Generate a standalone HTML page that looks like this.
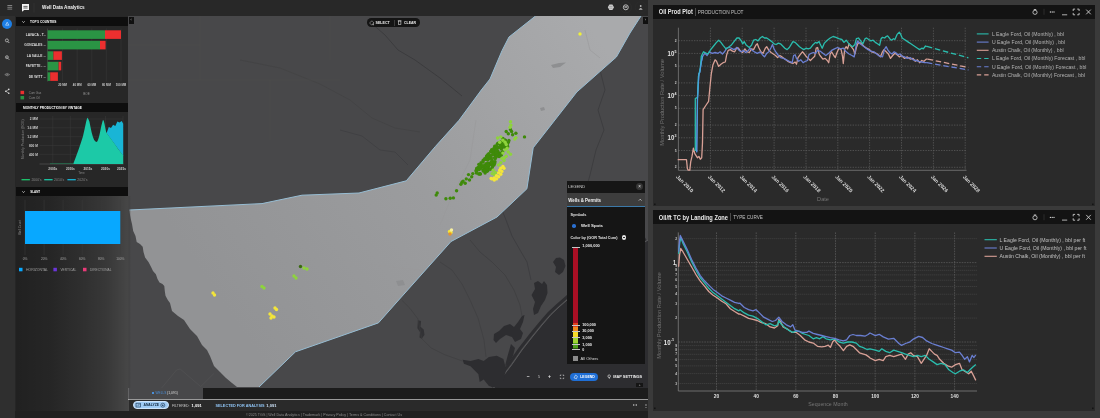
<!DOCTYPE html>
<html><head><meta charset="utf-8"><title>Well Data Analytics</title>
<style>
*{margin:0;padding:0;box-sizing:border-box}
html,body{width:1100px;height:418px;overflow:hidden;background:#3a3a3a;font-family:"Liberation Sans",sans-serif;color:#fff}
.abs{position:absolute}
#app{position:absolute;left:0;top:0;width:648px;height:418px;background:#262626;overflow:hidden}
.t{position:absolute;white-space:nowrap;line-height:1}
svg{position:absolute;left:0;top:0;overflow:visible}
svg text{font-family:"Liberation Sans",sans-serif}
</style></head><body>
<div id="root" style="position:absolute;left:0;top:0;width:1100px;height:418px;will-change:transform">

<div id="app">
<svg id="map" width="648" height="418" viewBox="0 0 648 418">
<rect x="128" y="16" width="520" height="384" fill="#48484a"/>
<path d="M493.8 388.0 L500.0 380.0 L511.7 364.8 L522.0 350.0 L533.0 336.0 L542.0 325.0 L551.0 314.6 L559.0 307.0 L567.0 300.0 L590.0 280.0 L620.0 258.0 L648.0 240.0 L648 388 Z" fill="#2d2d30"/>
<path d="M493.8 388.0 L500.0 380.0 L511.7 364.8 L522.0 350.0 L533.0 336.0 L542.0 325.0 L551.0 314.6 L559.0 307.0 L567.0 300.0 L590.0 280.0 L620.0 258.0 L648.0 240.0" fill="none" stroke="#2d2d30" stroke-width="3" transform="translate(-2.2 -1.2)"/>
<path d="M493.8 388.0 L500.0 380.0 L511.7 364.8 L522.0 350.0 L533.0 336.0 L542.0 325.0 L551.0 314.6 L559.0 307.0 L567.0 300.0 L590.0 280.0 L620.0 258.0 L648.0 240.0" fill="none" stroke="#58585a" stroke-width="1"/>
<path d="M462.6 359.7 L470.5 361.1 L478.4 358.9 L483.7 361.1 L488.9 357.1 L496.8 355.8 L503.4 358.9 L506.1 368.9 L503.4 380.8 L498.2 387.9 L488.9 386.1 L483.7 379.5 L479.7 382.1 L478.4 374.2 L470.5 366.3 L463.9 363.7 Z" fill="#2d2d30"/>
<path d="M417.9 320.3 L421.1 321.1 L420.5 326.8 L423.7 329.5 L424.5 334.7 L421.8 338.7 L419.5 337.4 L420.0 332.1 L417.4 328.2 Z" fill="#323235"/>
<path d="M402.1 300.5 L410.0 308.4 L417.9 318.9 L421.8 338.7 L431.1 347.9 L444.2 354.5 L462.6 361.1" fill="none" stroke="#3c3c3e" stroke-width="0.6"/>
<path d="M494 334 L499 331 L504 326 L510 324 L514 327 L518 322 L522 316 L524.5 315 L523 322 L520 329 L523 333 L521 339 L515 342 L512 337 L506 335 L500 339 L496 343 L493.5 340 Z" fill="#2d2d30"/>
<path d="M531.5 295 L535 289 L534 283 L538 281 L542 284 L544 281 L547 285 L547.5 293 L545 300 L541 306 L538 313 L534 315 L533 309 L535 302 Z" fill="#2d2d30"/>
<path d="M553 262 L556 258 L560 257.5 L564 260 L565.5 266 L563 272 L559 275 L555 272 L556 267 Z" fill="#2d2d30"/>
<path d="M511 344 L515 348 L513 356 L508 364 L505 366 L507 358 Z" fill="#2d2d30"/>
<path d="M497 190 L500 205 L506 220 L512 236 L520 250 L527 262 L531 280" fill="none" stroke="#3a3a3c" stroke-width="0.7"/>
<path d="M470 240 L480 252 L492 262 L505 275 L514 290 L520 305 L522 316" fill="none" stroke="#3a3a3c" stroke-width="0.6"/>
<path d="M440 262 L452 270 L462 284 L470 300 L478 318 L484 340 L486 357" fill="none" stroke="#3a3a3c" stroke-width="0.5"/>
<path d="M600 70 L605 90 L598 110 L604 130 L596 150 L590 175 L583 200" fill="none" stroke="#3a3a3c" stroke-width="0.8"/>
<path d="M370 22 L385 35 L398 50 L415 60 L440 78 L462 96" fill="none" stroke="#3a3a3c" stroke-width="0.9"/>
<path d="M240 60 L280 68 L320 84 L350 100 L372 118 L395 128 L420 132" fill="none" stroke="#424244" stroke-width="0.8"/>
<path d="M340 130 L362 136 L380 150 L395 152 L408 165" fill="none" stroke="#3e3e40" stroke-width="0.7"/>
<path d="M200 16 L200 80 M200 45 L128 45 M270 80 L270 140 M128 80 L340 80 M330 16 L330 60" fill="none" stroke="#4d4d4f" stroke-width="0.5"/>
<path d="M161.6 388 L176.5 370 L180.2 369 L200.7 386.6 L213.8 373.6" fill="none" stroke="#515153" stroke-width="0.7"/>
<defs><linearGradient id="pg" gradientUnits="userSpaceOnUse" x1="220" y1="300" x2="600" y2="40"><stop offset="0" stop-color="#929395"/><stop offset="0.5" stop-color="#9b9c9e"/><stop offset="1" stop-color="#a9aaac"/></linearGradient></defs>
<path d="M535.5 16.0 L509.0 37.0 L502.0 50.7 L490.0 79.0 L481.3 90.0 L459.0 120.3 L435.3 146.6 L406.3 180.8 L359.0 193.0 L302.0 195.2 L262.0 203.6 L129.1 210.0 L130.8 219.0 L132.0 224.0 L133.2 231.0 L135.5 236.0 L136.7 242.0 L140.0 244.0 L142.7 246.7 L143.5 252.0 L145.1 257.4 L148.5 262.0 L151.1 267.0 L153.0 271.0 L155.9 274.2 L157.5 279.0 L159.5 282.5 L162.5 284.0 L164.3 286.1 L164.8 291.0 L165.5 295.7 L167.8 300.0 L170.0 303.0 L172.0 311.0 L178.0 316.0 L184.0 320.0 L190.0 329.0 L197.0 336.0 L202.0 345.0 L207.0 350.0 L210.0 356.0 L214.0 366.0 L220.0 372.0 L226.0 378.0 L232.0 383.0 L237.0 387.0 L259.0 387.0 L295.5 351.8 L378.4 322.9 L396.0 303.0 L451.0 241.5 L497.0 217.0 L526.9 188.8 L533.2 147.8 L576.8 92.0 L616.4 57.0 L630.0 33.0 L641.0 16.0 Z" fill="url(#pg)"/>
<path d="M535.5 16.0 L509.0 37.0 L502.0 50.7 L490.0 79.0 L481.3 90.0 L459.0 120.3 L435.3 146.6 L406.3 180.8 L359.0 193.0 L302.0 195.2 L262.0 203.6 L129.1 210.0" fill="none" stroke="#97bdd3" stroke-width="1"/>
<path d="M259.0 387.0 L295.5 351.8 L378.4 322.9 L396.0 303.0 L451.0 241.5 L497.0 217.0 L526.9 188.8 L533.2 147.8 L576.8 92.0 L616.4 57.0 L630.0 33.0 L641.0 16.0" fill="none" stroke="#97bdd3" stroke-width="1"/>
<path d="M300 211 L330 250 L345 262 L420 270 M476 120 L470 160 L452 196 L440 225 M585 30 L590 50 L600 58" fill="none" stroke="#98999b" stroke-width="0.6"/>
<path d="M551 65 L559 63 L566 62.5 L560 67 L553 68 Z M396 281 L403 280 L405 285 L398 286 Z M540 108 L544 107 L545 110 L541 111 Z" fill="#8e8f91"/>
<circle cx="492.5" cy="150.7" r="1.7" fill="#3f8a0a"/>
<circle cx="487.8" cy="170.6" r="1.7" fill="#3f8a0a"/>
<circle cx="494.2" cy="152.1" r="1.7" fill="#3f8a0a"/>
<circle cx="506.1" cy="147.5" r="1.7" fill="#3f8a0a"/>
<circle cx="483.0" cy="170.1" r="1.7" fill="#3f8a0a"/>
<circle cx="496.8" cy="151.0" r="1.7" fill="#3f8a0a"/>
<circle cx="498.6" cy="153.4" r="1.7" fill="#3f8a0a"/>
<circle cx="483.2" cy="160.2" r="1.7" fill="#3f8a0a"/>
<circle cx="500.6" cy="147.4" r="1.7" fill="#3f8a0a"/>
<circle cx="487.6" cy="167.6" r="1.7" fill="#3f8a0a"/>
<circle cx="494.4" cy="154.6" r="1.7" fill="#3f8a0a"/>
<circle cx="489.9" cy="163.6" r="1.7" fill="#3f8a0a"/>
<circle cx="504.5" cy="147.2" r="1.7" fill="#3f8a0a"/>
<circle cx="486.2" cy="163.8" r="1.7" fill="#3f8a0a"/>
<circle cx="485.1" cy="173.0" r="1.7" fill="#3f8a0a"/>
<circle cx="494.7" cy="146.3" r="1.7" fill="#3f8a0a"/>
<circle cx="485.5" cy="159.4" r="1.7" fill="#3f8a0a"/>
<circle cx="491.7" cy="161.6" r="1.7" fill="#3f8a0a"/>
<circle cx="489.6" cy="155.8" r="1.7" fill="#3f8a0a"/>
<circle cx="504.8" cy="141.9" r="1.7" fill="#3f8a0a"/>
<circle cx="477.0" cy="168.2" r="1.7" fill="#3f8a0a"/>
<circle cx="480.9" cy="164.8" r="1.7" fill="#3f8a0a"/>
<circle cx="477.5" cy="168.9" r="1.7" fill="#3f8a0a"/>
<circle cx="484.0" cy="169.4" r="1.7" fill="#3f8a0a"/>
<circle cx="500.4" cy="142.3" r="1.7" fill="#3f8a0a"/>
<circle cx="476.1" cy="170.5" r="1.7" fill="#3f8a0a"/>
<circle cx="484.7" cy="158.6" r="1.7" fill="#3f8a0a"/>
<circle cx="504.7" cy="144.1" r="1.7" fill="#3f8a0a"/>
<circle cx="491.1" cy="157.9" r="1.7" fill="#3f8a0a"/>
<circle cx="495.7" cy="156.7" r="1.7" fill="#3f8a0a"/>
<circle cx="491.5" cy="164.8" r="1.7" fill="#3f8a0a"/>
<circle cx="489.0" cy="157.9" r="1.7" fill="#3f8a0a"/>
<circle cx="505.3" cy="140.9" r="1.7" fill="#3f8a0a"/>
<circle cx="486.7" cy="156.0" r="1.7" fill="#3f8a0a"/>
<circle cx="491.7" cy="149.6" r="1.7" fill="#3f8a0a"/>
<circle cx="493.3" cy="153.9" r="1.7" fill="#3f8a0a"/>
<circle cx="496.2" cy="157.0" r="1.7" fill="#3f8a0a"/>
<circle cx="504.4" cy="146.1" r="1.7" fill="#3f8a0a"/>
<circle cx="494.0" cy="165.1" r="1.7" fill="#3f8a0a"/>
<circle cx="498.9" cy="153.3" r="1.7" fill="#3f8a0a"/>
<circle cx="501.9" cy="147.5" r="1.7" fill="#3f8a0a"/>
<circle cx="486.5" cy="156.8" r="1.7" fill="#3f8a0a"/>
<circle cx="484.4" cy="170.8" r="1.7" fill="#3f8a0a"/>
<circle cx="489.9" cy="156.6" r="1.7" fill="#3f8a0a"/>
<circle cx="494.6" cy="157.8" r="1.7" fill="#3f8a0a"/>
<circle cx="493.5" cy="162.0" r="1.7" fill="#3f8a0a"/>
<circle cx="491.1" cy="158.0" r="1.7" fill="#3f8a0a"/>
<circle cx="500.9" cy="145.8" r="1.7" fill="#3f8a0a"/>
<circle cx="500.6" cy="143.8" r="1.7" fill="#3f8a0a"/>
<circle cx="490.7" cy="151.5" r="1.7" fill="#3f8a0a"/>
<circle cx="490.1" cy="164.4" r="1.7" fill="#3f8a0a"/>
<circle cx="501.2" cy="148.1" r="1.7" fill="#3f8a0a"/>
<circle cx="498.4" cy="147.5" r="1.7" fill="#3f8a0a"/>
<circle cx="491.7" cy="155.0" r="1.7" fill="#3f8a0a"/>
<circle cx="507.5" cy="143.6" r="1.7" fill="#3f8a0a"/>
<circle cx="479.7" cy="173.6" r="1.7" fill="#3f8a0a"/>
<circle cx="483.3" cy="171.1" r="1.7" fill="#3f8a0a"/>
<circle cx="505.2" cy="140.2" r="1.7" fill="#3f8a0a"/>
<circle cx="500.8" cy="154.4" r="1.7" fill="#3f8a0a"/>
<circle cx="508.9" cy="140.5" r="1.7" fill="#3f8a0a"/>
<circle cx="482.5" cy="166.8" r="1.7" fill="#3f8a0a"/>
<circle cx="497.6" cy="147.9" r="1.7" fill="#3f8a0a"/>
<circle cx="493.4" cy="152.0" r="1.7" fill="#3f8a0a"/>
<circle cx="478.7" cy="174.0" r="1.7" fill="#3f8a0a"/>
<circle cx="501.5" cy="152.7" r="1.7" fill="#3f8a0a"/>
<circle cx="487.4" cy="157.5" r="1.7" fill="#3f8a0a"/>
<circle cx="491.1" cy="162.1" r="1.7" fill="#3f8a0a"/>
<circle cx="506.2" cy="144.3" r="1.7" fill="#3f8a0a"/>
<circle cx="491.9" cy="164.3" r="1.7" fill="#3f8a0a"/>
<circle cx="489.2" cy="158.7" r="1.7" fill="#3f8a0a"/>
<circle cx="497.1" cy="148.1" r="1.7" fill="#3f8a0a"/>
<circle cx="492.0" cy="160.1" r="1.7" fill="#3f8a0a"/>
<circle cx="490.9" cy="164.0" r="1.7" fill="#3f8a0a"/>
<circle cx="498.7" cy="143.5" r="1.7" fill="#3f8a0a"/>
<circle cx="504.4" cy="144.9" r="1.7" fill="#3f8a0a"/>
<circle cx="479.3" cy="167.7" r="1.7" fill="#3f8a0a"/>
<circle cx="497.9" cy="151.3" r="1.7" fill="#3f8a0a"/>
<circle cx="485.0" cy="170.3" r="1.7" fill="#3f8a0a"/>
<circle cx="487.3" cy="169.9" r="1.7" fill="#3f8a0a"/>
<circle cx="481.0" cy="165.8" r="1.7" fill="#3f8a0a"/>
<circle cx="488.1" cy="156.2" r="1.7" fill="#3f8a0a"/>
<circle cx="495.5" cy="149.1" r="1.7" fill="#3f8a0a"/>
<circle cx="502.9" cy="138.4" r="1.7" fill="#3f8a0a"/>
<circle cx="478.3" cy="167.4" r="1.7" fill="#3f8a0a"/>
<circle cx="499.8" cy="154.2" r="1.7" fill="#3f8a0a"/>
<circle cx="505.3" cy="147.6" r="1.7" fill="#3f8a0a"/>
<circle cx="493.8" cy="151.0" r="1.7" fill="#3f8a0a"/>
<circle cx="501.0" cy="143.6" r="1.7" fill="#3f8a0a"/>
<circle cx="476.4" cy="173.0" r="1.7" fill="#3f8a0a"/>
<circle cx="494.3" cy="149.0" r="1.7" fill="#3f8a0a"/>
<circle cx="480.9" cy="168.4" r="1.7" fill="#3f8a0a"/>
<circle cx="495.0" cy="161.7" r="1.7" fill="#3f8a0a"/>
<circle cx="497.4" cy="143.7" r="1.7" fill="#3f8a0a"/>
<circle cx="498.5" cy="143.0" r="1.7" fill="#3f8a0a"/>
<circle cx="486.6" cy="158.7" r="1.7" fill="#3f8a0a"/>
<circle cx="500.6" cy="143.8" r="1.7" fill="#3f8a0a"/>
<circle cx="487.8" cy="170.3" r="1.7" fill="#3f8a0a"/>
<circle cx="504.6" cy="141.9" r="1.7" fill="#3f8a0a"/>
<circle cx="503.0" cy="144.5" r="1.7" fill="#3f8a0a"/>
<circle cx="487.0" cy="171.4" r="1.7" fill="#3f8a0a"/>
<circle cx="504.8" cy="142.9" r="1.7" fill="#3f8a0a"/>
<circle cx="491.8" cy="151.5" r="1.7" fill="#3f8a0a"/>
<circle cx="505.2" cy="140.1" r="1.7" fill="#3f8a0a"/>
<circle cx="495.2" cy="158.7" r="1.7" fill="#3f8a0a"/>
<circle cx="496.3" cy="148.2" r="1.7" fill="#3f8a0a"/>
<circle cx="487.6" cy="160.1" r="1.7" fill="#3f8a0a"/>
<circle cx="487.9" cy="163.3" r="1.7" fill="#3f8a0a"/>
<circle cx="488.8" cy="153.8" r="1.7" fill="#3f8a0a"/>
<circle cx="491.2" cy="151.2" r="1.7" fill="#3f8a0a"/>
<circle cx="508.5" cy="142.1" r="1.7" fill="#3f8a0a"/>
<circle cx="501.8" cy="141.8" r="1.7" fill="#3f8a0a"/>
<circle cx="507.7" cy="146.8" r="1.7" fill="#3f8a0a"/>
<circle cx="504.3" cy="141.2" r="1.7" fill="#3f8a0a"/>
<circle cx="477.1" cy="168.7" r="1.7" fill="#3f8a0a"/>
<circle cx="496.7" cy="150.5" r="1.7" fill="#3f8a0a"/>
<circle cx="496.5" cy="152.0" r="1.7" fill="#3f8a0a"/>
<circle cx="503.5" cy="146.4" r="1.7" fill="#3f8a0a"/>
<circle cx="485.1" cy="167.9" r="1.7" fill="#3f8a0a"/>
<circle cx="504.4" cy="145.9" r="1.7" fill="#3f8a0a"/>
<circle cx="494.6" cy="163.5" r="1.7" fill="#3f8a0a"/>
<circle cx="495.9" cy="153.6" r="1.7" fill="#3f8a0a"/>
<circle cx="496.2" cy="155.4" r="1.7" fill="#3f8a0a"/>
<circle cx="493.6" cy="150.1" r="1.7" fill="#3f8a0a"/>
<circle cx="497.1" cy="154.1" r="1.7" fill="#3f8a0a"/>
<circle cx="480.4" cy="173.9" r="1.7" fill="#3f8a0a"/>
<circle cx="491.3" cy="162.6" r="1.7" fill="#3f8a0a"/>
<circle cx="504.2" cy="142.5" r="1.7" fill="#3f8a0a"/>
<circle cx="501.3" cy="155.0" r="1.7" fill="#3f8a0a"/>
<circle cx="501.2" cy="154.5" r="1.7" fill="#3f8a0a"/>
<circle cx="484.1" cy="167.2" r="1.7" fill="#3f8a0a"/>
<circle cx="499.9" cy="146.4" r="1.7" fill="#3f8a0a"/>
<circle cx="493.3" cy="153.8" r="1.7" fill="#3f8a0a"/>
<circle cx="481.1" cy="162.6" r="1.7" fill="#3f8a0a"/>
<circle cx="501.3" cy="149.1" r="1.7" fill="#3f8a0a"/>
<circle cx="480.0" cy="174.0" r="1.7" fill="#3f8a0a"/>
<circle cx="488.4" cy="166.2" r="1.7" fill="#3f8a0a"/>
<circle cx="494.0" cy="148.2" r="1.7" fill="#3f8a0a"/>
<circle cx="485.3" cy="170.2" r="1.7" fill="#3f8a0a"/>
<circle cx="496.5" cy="147.4" r="1.7" fill="#3f8a0a"/>
<circle cx="501.8" cy="143.8" r="1.7" fill="#3f8a0a"/>
<circle cx="481.9" cy="165.8" r="1.7" fill="#3f8a0a"/>
<circle cx="488.3" cy="168.2" r="1.7" fill="#3f8a0a"/>
<circle cx="484.6" cy="165.3" r="1.7" fill="#3f8a0a"/>
<circle cx="504.4" cy="142.3" r="1.7" fill="#3f8a0a"/>
<circle cx="490.6" cy="169.3" r="1.7" fill="#3f8a0a"/>
<circle cx="484.6" cy="170.8" r="1.7" fill="#3f8a0a"/>
<circle cx="499.4" cy="156.4" r="1.7" fill="#3f8a0a"/>
<circle cx="496.4" cy="150.3" r="1.7" fill="#3f8a0a"/>
<circle cx="492.3" cy="167.4" r="1.7" fill="#3f8a0a"/>
<circle cx="476.5" cy="171.3" r="1.7" fill="#3f8a0a"/>
<circle cx="507.2" cy="145.2" r="1.7" fill="#3f8a0a"/>
<circle cx="500.8" cy="153.7" r="1.7" fill="#3f8a0a"/>
<circle cx="486.8" cy="169.0" r="1.7" fill="#3f8a0a"/>
<circle cx="499.1" cy="156.5" r="1.7" fill="#3f8a0a"/>
<circle cx="496.6" cy="154.9" r="1.7" fill="#3f8a0a"/>
<circle cx="487.0" cy="166.9" r="1.7" fill="#3f8a0a"/>
<circle cx="496.9" cy="154.5" r="1.7" fill="#3f8a0a"/>
<circle cx="483.1" cy="162.0" r="1.7" fill="#3f8a0a"/>
<circle cx="496.4" cy="145.8" r="1.7" fill="#3f8a0a"/>
<circle cx="487.8" cy="154.6" r="1.7" fill="#3f8a0a"/>
<circle cx="496.1" cy="152.6" r="1.7" fill="#3f8a0a"/>
<circle cx="502.7" cy="151.7" r="1.7" fill="#3f8a0a"/>
<circle cx="476.8" cy="168.6" r="1.7" fill="#3f8a0a"/>
<circle cx="492.7" cy="165.8" r="1.7" fill="#3f8a0a"/>
<circle cx="491.5" cy="162.5" r="1.7" fill="#3f8a0a"/>
<circle cx="478.8" cy="164.4" r="1.7" fill="#3f8a0a"/>
<circle cx="486.5" cy="167.8" r="1.7" fill="#3f8a0a"/>
<circle cx="487.7" cy="165.0" r="1.7" fill="#3f8a0a"/>
<circle cx="479.4" cy="166.9" r="1.7" fill="#3f8a0a"/>
<circle cx="479.2" cy="169.5" r="1.7" fill="#3f8a0a"/>
<circle cx="468.5" cy="174.6" r="1.7" fill="#3f8a0a"/>
<circle cx="471.7" cy="176.8" r="1.7" fill="#3f8a0a"/>
<circle cx="466.3" cy="178.9" r="1.7" fill="#3f8a0a"/>
<circle cx="469.5" cy="180.0" r="1.7" fill="#3f8a0a"/>
<circle cx="462.0" cy="182.2" r="1.7" fill="#3f8a0a"/>
<circle cx="465.2" cy="183.2" r="1.7" fill="#3f8a0a"/>
<circle cx="460.9" cy="184.3" r="1.7" fill="#3f8a0a"/>
<circle cx="463.1" cy="181.1" r="1.7" fill="#3f8a0a"/>
<circle cx="472.8" cy="173.6" r="1.7" fill="#3f8a0a"/>
<circle cx="506.2" cy="131.5" r="1.7" fill="#3f8a0a"/>
<circle cx="508.3" cy="133.7" r="1.7" fill="#3f8a0a"/>
<circle cx="511.6" cy="131.5" r="1.7" fill="#3f8a0a"/>
<circle cx="512.6" cy="134.8" r="1.7" fill="#3f8a0a"/>
<circle cx="515.9" cy="133.3" r="1.7" fill="#3f8a0a"/>
<circle cx="510.5" cy="129.4" r="1.7" fill="#3f8a0a"/>
<circle cx="524.5" cy="136.9" r="1.7" fill="#3f8a0a"/>
<circle cx="437.2" cy="192.9" r="1.7" fill="#3f8a0a"/>
<circle cx="436.2" cy="195.1" r="1.7" fill="#3f8a0a"/>
<circle cx="456.6" cy="190.8" r="1.7" fill="#3f8a0a"/>
<circle cx="445.9" cy="198.8" r="1.7" fill="#3f8a0a"/>
<circle cx="450.2" cy="198.3" r="1.7" fill="#3f8a0a"/>
<circle cx="453.4" cy="197.9" r="1.7" fill="#3f8a0a"/>
<circle cx="510.5" cy="121.8" r="1.7" fill="#8ed43c"/>
<circle cx="510.9" cy="125.1" r="1.7" fill="#8ed43c"/>
<circle cx="510.0" cy="127.2" r="1.7" fill="#8ed43c"/>
<circle cx="515.9" cy="137.6" r="1.7" fill="#8ed43c"/>
<circle cx="514.8" cy="139.1" r="1.7" fill="#8ed43c"/>
<circle cx="497.6" cy="138.0" r="1.7" fill="#8ed43c"/>
<circle cx="500.8" cy="136.9" r="1.7" fill="#8ed43c"/>
<circle cx="502.9" cy="140.2" r="1.7" fill="#8ed43c"/>
<circle cx="499.7" cy="142.3" r="1.7" fill="#8ed43c"/>
<circle cx="505.1" cy="142.3" r="1.7" fill="#8ed43c"/>
<circle cx="506.2" cy="144.5" r="1.7" fill="#8ed43c"/>
<circle cx="505.1" cy="149.9" r="1.7" fill="#8ed43c"/>
<circle cx="508.3" cy="152.0" r="1.7" fill="#8ed43c"/>
<circle cx="510.5" cy="154.2" r="1.7" fill="#8ed43c"/>
<circle cx="502.9" cy="153.1" r="1.7" fill="#8ed43c"/>
<circle cx="506.2" cy="156.3" r="1.7" fill="#8ed43c"/>
<circle cx="501.9" cy="158.5" r="1.7" fill="#8ed43c"/>
<circle cx="504.0" cy="160.6" r="1.7" fill="#8ed43c"/>
<circle cx="500.8" cy="162.8" r="1.7" fill="#8ed43c"/>
<circle cx="498.6" cy="164.9" r="1.7" fill="#8ed43c"/>
<circle cx="493.2" cy="170.3" r="1.7" fill="#8ed43c"/>
<circle cx="495.4" cy="172.5" r="1.7" fill="#8ed43c"/>
<circle cx="492.2" cy="173.6" r="1.7" fill="#8ed43c"/>
<circle cx="494.3" cy="174.6" r="1.7" fill="#8ed43c"/>
<circle cx="507.2" cy="148.3" r="1.7" fill="#8ed43c"/>
<circle cx="504.4" cy="157.8" r="1.7" fill="#8ed43c"/>
<circle cx="502.9" cy="166.4" r="1.7" fill="#f3e53a"/>
<circle cx="500.8" cy="168.2" r="1.7" fill="#f3e53a"/>
<circle cx="504.0" cy="168.2" r="1.7" fill="#f3e53a"/>
<circle cx="499.7" cy="170.3" r="1.7" fill="#f3e53a"/>
<circle cx="501.9" cy="171.4" r="1.7" fill="#f3e53a"/>
<circle cx="498.6" cy="172.9" r="1.7" fill="#f3e53a"/>
<circle cx="500.8" cy="174.2" r="1.7" fill="#f3e53a"/>
<circle cx="496.5" cy="175.7" r="1.7" fill="#f3e53a"/>
<circle cx="498.6" cy="176.8" r="1.7" fill="#f3e53a"/>
<circle cx="494.3" cy="177.9" r="1.7" fill="#f3e53a"/>
<circle cx="496.5" cy="178.9" r="1.7" fill="#f3e53a"/>
<circle cx="492.2" cy="178.9" r="1.7" fill="#f3e53a"/>
<circle cx="494.3" cy="180.0" r="1.7" fill="#f3e53a"/>
<circle cx="491.1" cy="178.5" r="1.7" fill="#f3e53a"/>
<circle cx="300.5" cy="266.5" r="1.7" fill="#3a6a10"/>
<circle cx="304.0" cy="268.0" r="1.7" fill="#8ed43c"/>
<circle cx="307.0" cy="269.0" r="1.7" fill="#8ed43c"/>
<circle cx="294.0" cy="276.0" r="1.7" fill="#8ed43c"/>
<circle cx="296.0" cy="278.0" r="1.7" fill="#8ed43c"/>
<circle cx="262.0" cy="286.5" r="1.7" fill="#8ed43c"/>
<circle cx="264.0" cy="288.0" r="1.7" fill="#8ed43c"/>
<circle cx="213.0" cy="293.0" r="1.7" fill="#f3e53a"/>
<circle cx="214.5" cy="295.0" r="1.7" fill="#f3e53a"/>
<circle cx="275.0" cy="308.0" r="1.7" fill="#f3e53a"/>
<circle cx="276.5" cy="309.5" r="1.7" fill="#f3e53a"/>
<circle cx="270.0" cy="314.0" r="1.7" fill="#f3e53a"/>
<circle cx="272.0" cy="316.0" r="1.7" fill="#f3e53a"/>
<circle cx="274.0" cy="317.0" r="1.7" fill="#f3e53a"/>
<circle cx="271.0" cy="318.0" r="1.7" fill="#f3e53a"/>
<circle cx="449.5" cy="231.5" r="1.7" fill="#f3e53a"/>
<circle cx="451.0" cy="232.5" r="1.7" fill="#f3e53a"/>
<circle cx="450.0" cy="234.0" r="1.7" fill="#e8932a"/>
<circle cx="451.5" cy="230.0" r="1.7" fill="#f7f0a0"/>
<circle cx="580.0" cy="34.0" r="1.7" fill="#eef03a"/>
</svg>
<div class="abs" style="left:366.6px;top:18.4px;width:53.3px;height:8.3px;background:#141414;border-radius:4.15px;"></div>
<div class="abs" style="left:393.5px;top:19.5px;width:0.6px;height:6.0px;background:#3a3a3a;"></div>
<svg width="648" height="418" style="top:0.6px"><circle cx="371.8" cy="22" r="1.8" fill="none" stroke="#ddd" stroke-width="0.6" stroke-dasharray="1.2 0.6"/><path d="M372.3 22.3 L374 24 L373 24.2 Z" fill="#fff"/><rect x="398.3" y="20" width="2.6" height="3.6" fill="none" stroke="#ddd" stroke-width="0.6"/><path d="M397.8 19.8 H401.4" stroke="#ddd" stroke-width="0.6"/></svg>
<svg width="1100" height="418">
<text x="375.5" y="24" font-size="3.70" font-weight="bold" fill="#eee" text-anchor="start" textLength="14.3" lengthAdjust="spacingAndGlyphs">SELECT</text>
</svg>
<svg width="1100" height="418">
<text x="404.0" y="24" font-size="3.70" font-weight="bold" fill="#eee" text-anchor="start" textLength="12.0" lengthAdjust="spacingAndGlyphs">CLEAR</text>
</svg>
<div class="abs" style="left:129.0px;top:16.5px;width:5.0px;height:7.0px;background:#101010;"></div>
<svg width="1100" height="418">
<text x="130.5" y="21" font-size="3.50" fill="#ccc" text-anchor="start">‹</text>
</svg>
<div class="abs" style="left:643.0px;top:16.5px;width:5.0px;height:7.5px;background:#101010;"></div>
<svg width="1100" height="418">
<text x="644.8" y="21" font-size="3.50" fill="#ccc" text-anchor="start">›</text>
</svg>
<div class="abs" style="left:566.6px;top:181.1px;width:78.7px;height:12.1px;background:#161616;"></div>
<svg width="1100" height="418">
<text x="568.3" y="188" font-size="3.90" fill="#cfcfcf" text-anchor="start" textLength="16.8" lengthAdjust="spacingAndGlyphs">LEGEND</text>
</svg>
<div class="abs" style="left:636.2px;top:183.2px;width:7.0px;height:7.0px;background:#353535;border-radius:50%;"></div>
<svg width="1100" height="418">
<text x="638.3" y="188" font-size="4.60" fill="#e0e0e0" text-anchor="start">×</text>
</svg>
<div class="abs" style="left:566.6px;top:193.2px;width:78.7px;height:13.2px;background:#3d3d3d;"></div>
<div class="abs" style="left:566.6px;top:206.4px;width:78.7px;height:0.9px;background:#3c79a8;"></div>
<svg width="1100" height="418">
<text x="568.3" y="202" font-size="4.60" font-weight="bold" fill="#f2f2f2" text-anchor="start" textLength="32.7" lengthAdjust="spacingAndGlyphs">Wells &amp; Permits</text>
</svg>
<svg width="648" height="418"><path d="M638.8 200.6 L640.2 199.2 L641.6 200.6" fill="none" stroke="#ddd" stroke-width="0.7"/></svg>
<div class="abs" style="left:566.6px;top:207.3px;width:78.7px;height:156.4px;background:#151515;"></div>
<svg width="1100" height="418">
<text x="570.5" y="216" font-size="3.80" font-weight="bold" fill="#e6e6e6" text-anchor="start" textLength="16.0" lengthAdjust="spacingAndGlyphs">Symbols</text>
</svg>
<div class="abs" style="left:572.4px;top:224.2px;width:3.4px;height:3.4px;background:#2a6fd0;border-radius:50%;"></div>
<svg width="1100" height="418">
<text x="581.0" y="227" font-size="4.30" font-weight="bold" fill="#eee" text-anchor="start" textLength="22.0" lengthAdjust="spacingAndGlyphs">Well Spots</text>
</svg>
<svg width="1100" height="418">
<text x="570.5" y="239" font-size="3.80" font-weight="bold" fill="#e6e6e6" text-anchor="start" textLength="47.0" lengthAdjust="spacingAndGlyphs">Color by (GOR Total Cum)</text>
</svg>
<div class="abs" style="left:621.8px;top:235.2px;width:4.6px;height:4.6px;background:#e6e6e6;border-radius:50%;"></div>
<div class="abs" style="left:623.3px;top:236.7px;width:1.6px;height:1.6px;background:#151515;border-radius:50%;"></div>
<div class="abs" style="left:572.5px;top:247.0px;width:5.4px;height:76.0px;background:#a80f24;"></div>
<div class="abs" style="left:571.7px;top:246.8px;width:8.6px;height:0.5px;background:#c8c8c8;"></div>
<svg width="1100" height="418">
<text x="582.2" y="247" font-size="3.60" font-weight="bold" fill="#eee" text-anchor="start" textLength="17.6" lengthAdjust="spacingAndGlyphs">1,000,000</text>
</svg>
<div class="abs" style="left:572.5px;top:323.0px;width:5.4px;height:3.7px;background:#e2411c;"></div>
<div class="abs" style="left:572.5px;top:326.6px;width:5.4px;height:4.3px;background:#f08a1e;"></div>
<div class="abs" style="left:572.5px;top:330.8px;width:5.4px;height:6.5px;background:#f5dc28;"></div>
<div class="abs" style="left:572.5px;top:337.2px;width:5.4px;height:6.1px;background:#9fd534;"></div>
<div class="abs" style="left:572.5px;top:343.2px;width:5.4px;height:4.7px;background:#4f9f1c;"></div>
<div class="abs" style="left:572.5px;top:347.8px;width:5.4px;height:1.9px;background:#2c5d0c;"></div>
<div class="abs" style="left:571.7px;top:324.6px;width:8.6px;height:0.4px;background:#c8c8c8;"></div>
<svg width="1100" height="418">
<text x="582.2" y="326" font-size="3.60" font-weight="bold" fill="#eee" text-anchor="start" textLength="13.8" lengthAdjust="spacingAndGlyphs">100,000</text>
</svg>
<div class="abs" style="left:571.7px;top:331.0px;width:8.6px;height:0.4px;background:#c8c8c8;"></div>
<svg width="1100" height="418">
<text x="582.2" y="332" font-size="3.60" font-weight="bold" fill="#eee" text-anchor="start" textLength="11.8" lengthAdjust="spacingAndGlyphs">30,000</text>
</svg>
<div class="abs" style="left:571.7px;top:337.3px;width:8.6px;height:0.4px;background:#c8c8c8;"></div>
<svg width="1100" height="418">
<text x="582.2" y="339" font-size="3.60" font-weight="bold" fill="#eee" text-anchor="start" textLength="9.8" lengthAdjust="spacingAndGlyphs">3,000</text>
</svg>
<div class="abs" style="left:571.7px;top:344.1px;width:8.6px;height:0.4px;background:#c8c8c8;"></div>
<svg width="1100" height="418">
<text x="582.2" y="346" font-size="3.60" font-weight="bold" fill="#eee" text-anchor="start" textLength="9.8" lengthAdjust="spacingAndGlyphs">1,000</text>
</svg>
<div class="abs" style="left:571.7px;top:349.4px;width:8.6px;height:0.4px;background:#c8c8c8;"></div>
<svg width="1100" height="418">
<text x="582.2" y="351" font-size="3.60" font-weight="bold" fill="#eee" text-anchor="start">0</text>
</svg>
<div class="abs" style="left:572.5px;top:356.0px;width:5.3px;height:5.3px;background:#8c8c8c;"></div>
<svg width="1100" height="418">
<text x="580.6" y="360" font-size="3.70" fill="#ddd" text-anchor="start" textLength="17.8" lengthAdjust="spacingAndGlyphs">All Others</text>
</svg>
<svg width="1100" height="418">
<text x="526.8" y="378" font-size="5.00" font-weight="bold" fill="#eee" text-anchor="start">–</text>
</svg>
<svg width="1100" height="418">
<text x="538.0" y="378" font-size="3.60" fill="#ccc" text-anchor="start">5</text>
</svg>
<svg width="1100" height="418">
<text x="548.0" y="378" font-size="5.00" font-weight="bold" fill="#eee" text-anchor="start">+</text>
</svg>
<svg width="648" height="418"><path d="M560.3 376 V375 H561.3 M562.7 375 H563.7 V376 M563.7 377.6 V378.6 H562.7 M561.3 378.6 H560.3 V377.6" fill="none" stroke="#e8e8e8" stroke-width="0.6"/></svg>
<div class="abs" style="left:569.7px;top:372.6px;width:28.6px;height:8.1px;background:#1f6fd6;border-radius:4.05px;"></div>
<svg width="648" height="418"><path d="M574 377.8 L575.6 375 L577.4 376.4 L576.4 378.8 Z" fill="none" stroke="#fff" stroke-width="0.55"/></svg>
<svg width="1100" height="418">
<text x="580.2" y="378" font-size="3.70" font-weight="bold" fill="#fff" text-anchor="start" textLength="14.6" lengthAdjust="spacingAndGlyphs">LEGEND</text>
</svg>
<svg width="648" height="418"><circle cx="609.2" cy="376.2" r="1.3" fill="none" stroke="#eee" stroke-width="0.6"/><path d="M608.5 377.6 L609.2 379 L609.9 377.6" fill="#eee"/></svg>
<svg width="1100" height="418">
<text x="613.2" y="378" font-size="3.70" font-weight="bold" fill="#f0f0f0" text-anchor="start" textLength="29.0" lengthAdjust="spacingAndGlyphs">MAP SETTINGS</text>
</svg>
<div class="abs" style="left:636.2px;top:382.5px;width:7.1px;height:4.9px;background:#151515;"></div>
<svg width="1100" height="418">
<text x="638.7" y="386" font-size="3.40" fill="#bbb" text-anchor="start">+</text>
</svg>
<div class="abs" style="left:203.0px;top:387.8px;width:445.0px;height:11.4px;background:#1c1c1c;"></div>
<div class="abs" style="left:151.5px;top:391.6px;width:2.6px;height:2.6px;background:transparent;border:0.5px solid #4a8fd8;"></div>
<svg width="1100" height="418">
<text x="155.5" y="394" font-size="3.40" fill="#4a8fd8" text-anchor="start" textLength="10.8" lengthAdjust="spacingAndGlyphs">WELLS</text>
</svg>
<svg width="1100" height="418">
<text x="167.0" y="394" font-size="3.40" fill="#ddd" text-anchor="start" textLength="11.0" lengthAdjust="spacingAndGlyphs">(1,091)</text>
</svg>
<div class="abs" style="left:128.0px;top:399.2px;width:520.0px;height:0.8px;background:#9a9a9a;"></div>
<div class="abs" style="left:128.0px;top:400.0px;width:520.0px;height:10.8px;background:#2a2a2a;"></div>
<div class="abs" style="left:132.5px;top:401.0px;width:36.5px;height:8.4px;background:#9fcaf3;border-radius:4.2px;border:0.6px solid #cfe4fa;"></div>
<svg width="648" height="418"><rect x="136" y="403.2" width="4.6" height="3.8" fill="none" stroke="#17324f" stroke-width="0.6"/><path d="M136.8 405.8 L138 404.6 L139 405.4 L140 404.2" fill="none" stroke="#17324f" stroke-width="0.5"/><circle cx="162.8" cy="405.2" r="2" fill="none" stroke="#17324f" stroke-width="0.6"/><circle cx="162.8" cy="405.2" r="0.8" fill="#17324f"/></svg>
<svg width="1100" height="418">
<text x="143.5" y="406" font-size="3.50" font-weight="bold" fill="#10273f" text-anchor="start" textLength="15.5" lengthAdjust="spacingAndGlyphs">ANALYZE</text>
</svg>
<svg width="1100" height="418">
<text x="172.0" y="407" font-size="3.80" fill="#c8c8c8" text-anchor="start" textLength="17.5" lengthAdjust="spacingAndGlyphs">FILTERED:</text>
</svg>
<svg width="1100" height="418">
<text x="191.5" y="407" font-size="3.80" font-weight="bold" fill="#fff" text-anchor="start" textLength="10.2" lengthAdjust="spacingAndGlyphs">1,091</text>
</svg>
<svg width="1100" height="418">
<text x="215.5" y="407" font-size="3.80" font-weight="bold" fill="#8fc3f3" text-anchor="start" textLength="49.0" lengthAdjust="spacingAndGlyphs">SELECTED FOR ANALYSIS</text>
</svg>
<svg width="1100" height="418">
<text x="266.3" y="407" font-size="3.80" font-weight="bold" fill="#cfe4fa" text-anchor="start" textLength="10.2" lengthAdjust="spacingAndGlyphs">1,091</text>
</svg>
<svg width="1100" height="418">
<text x="633.3" y="406" font-size="3.60" fill="#aaa" text-anchor="start">▸◂</text>
</svg>
<svg width="1100" height="418">
<text x="643.5" y="407" font-size="4.20" font-weight="bold" fill="#ccc" text-anchor="start">⋮</text>
</svg>
<div class="abs" style="left:15.0px;top:410.8px;width:633.0px;height:7.2px;background:#202020;"></div>
<svg width="1100" height="418">
<text x="246.0" y="416" font-size="3.10" fill="#8a8a8a" text-anchor="start" textLength="156.0" lengthAdjust="spacingAndGlyphs">©2025 TGS | Well Data Analytics | Trademark | Privacy Policy | Terms &amp; Conditions | Contact Us</text>
</svg>
<div class="abs" style="left:0.0px;top:0.0px;width:648.0px;height:16.0px;background:#282828;"></div>
<svg width="648" height="418"><path d="M7.4 5.5 H12.2 M7.4 7.3 H12.2 M7.4 9.1 H12.2" stroke="#a8a8a8" stroke-width="0.7"/>
<path d="M22 4 H29 V10 H24.2 L22 11.8 Z" fill="#f4f4f4"/><path d="M23.4 6.4 H27.6 M23.4 8 H27.6" stroke="#272727" stroke-width="0.7"/>
<path d="M34 3 V12.5" stroke="#3a3a3a" stroke-width="0.5"/>
<path d="M609.4 4.5 H612.4 L614 7.3 L612.4 10.1 H609.4 L607.8 7.3 Z" fill="#cdcdcd"/><path d="M609.3 6.4 H612.5 M609.3 8.2 H612.5" stroke="#8a8a8a" stroke-width="0.6"/>
<circle cx="625.8" cy="7.3" r="2.5" fill="none" stroke="#b8b8b8" stroke-width="1"/><path d="M624.4 7 H627.2" stroke="#d0d0d0" stroke-width="1.2"/><circle cx="625.8" cy="7.3" r="5.6" fill="none" stroke="#303030" stroke-width="0.6"/><circle cx="640.7" cy="7.3" r="5.6" fill="none" stroke="#2e2e2e" stroke-width="0.6"/>
<circle cx="640.7" cy="6" r="0.9" fill="#b4b4b4"/><path d="M638.7 9.8 Q640.7 6.4 642.7 9.8 Z" fill="#b4b4b4"/>
</svg>
<svg width="1100" height="418">
<text x="42.1" y="9" font-size="4.70" font-weight="bold" fill="#f2f2f2" text-anchor="start" textLength="42.6" lengthAdjust="spacingAndGlyphs">Well Data Analytics</text>
</svg>
<div class="abs" style="left:0.0px;top:16.0px;width:15.0px;height:402.0px;background:#2f2f2f;"></div>
<div class="abs" style="left:2.0px;top:18.8px;width:10.4px;height:10.4px;background:#1d7fe6;border-radius:50%;"></div>
<svg width="648" height="418">
<path d="M5.6 25.2 L7.2 22.2 L8.8 25.2 Z" fill="none" stroke="#dfeeff" stroke-width="0.6"/>
<circle cx="6.9" cy="40.4" r="1.5" fill="none" stroke="#d0d0d0" stroke-width="0.7"/><path d="M8 41.6 L9.3 43" stroke="#d0d0d0" stroke-width="0.8"/>
<circle cx="6.9" cy="57.2" r="1.5" fill="none" stroke="#bdbdbd" stroke-width="0.7"/><path d="M8 58.4 L9.3 59.8" stroke="#bdbdbd" stroke-width="0.8"/><rect x="6.3" y="56.6" width="1.2" height="1.2" fill="#bdbdbd"/>
<path d="M4.8 74.6 Q7.2 72 9.6 74.6 Q7.2 77.2 4.8 74.6 Z" fill="none" stroke="#9a9a9a" stroke-width="0.6"/><circle cx="7.2" cy="74.6" r="0.7" fill="#9a9a9a"/>
<path d="M8.8 89.4 L5.8 91.3 L8.8 93.2" fill="none" stroke="#d8d8d8" stroke-width="0.6"/><circle cx="8.8" cy="89.4" r="0.8" fill="#e0e0e0"/><circle cx="5.8" cy="91.3" r="0.8" fill="#e0e0e0"/><circle cx="8.8" cy="93.2" r="0.8" fill="#e0e0e0"/>
</svg>
<div class="abs" style="left:15.5px;top:16.0px;width:112.5px;height:394.8px;background:#272727;"></div>
<div class="abs" style="left:15.5px;top:196.4px;width:113.5px;height:214.4px;background:transparent;background:linear-gradient(90deg,rgba(0,0,0,0.16) 0%,rgba(0,0,0,0.04) 30%,rgba(255,255,255,0.03) 55%,rgba(255,255,255,0.08) 80%,rgba(255,255,255,0.15) 100%);"></div>
<div class="abs" style="left:127.5px;top:196.4px;width:3.5px;height:191.4px;background:transparent;background:linear-gradient(90deg,rgba(62,62,62,1),rgba(62,62,62,0));"></div>
<div class="abs" style="left:15.7px;top:17.4px;width:112.3px;height:9.0px;background:#0e0e0e;"></div>
<svg width="1100" height="418">
<text x="30.0" y="23" font-size="3.90" font-weight="bold" fill="#fff" text-anchor="start" textLength="26.5" lengthAdjust="spacingAndGlyphs">TOP 5 COUNTIES</text>
</svg>
<svg width="648" height="418"><path d="M22.3 21.3 L23.5 22.6 L24.7 21.3" fill="none" stroke="#e6e6e6" stroke-width="0.7"/></svg>
<div class="abs" style="left:15.7px;top:102.6px;width:112.3px;height:9.0px;background:#0e0e0e;"></div>
<svg width="1100" height="418">
<text x="23.0" y="109" font-size="3.90" font-weight="bold" fill="#fff" text-anchor="start" textLength="59.0" lengthAdjust="spacingAndGlyphs">MONTHLY PRODUCTION BY VINTAGE</text>
</svg>
<div class="abs" style="left:15.7px;top:187.4px;width:112.3px;height:9.0px;background:#0e0e0e;"></div>
<svg width="1100" height="418">
<text x="30.3" y="193" font-size="3.90" font-weight="bold" fill="#fff" text-anchor="start" textLength="9.8" lengthAdjust="spacingAndGlyphs">SLANT</text>
</svg>
<svg width="648" height="418"><path d="M22.3 191.3 L23.5 192.6 L24.7 191.3" fill="none" stroke="#e6e6e6" stroke-width="0.7"/></svg>
<svg width="648" height="418">
<path d="M62.6 28.5 V81.5" stroke="#3a3a3a" stroke-width="0.5"/>
<path d="M77.2 28.5 V81.5" stroke="#3a3a3a" stroke-width="0.5"/>
<path d="M91.8 28.5 V81.5" stroke="#3a3a3a" stroke-width="0.5"/>
<path d="M106.4 28.5 V81.5" stroke="#3a3a3a" stroke-width="0.5"/>
<path d="M121.0 28.5 V81.5" stroke="#3a3a3a" stroke-width="0.5"/>
<path d="M47.5 28.5 V81.5" stroke="#555" stroke-width="0.5"/>
<rect x="47.6" y="30.3" width="57.4" height="8.6" fill="#2a9444"/>
<rect x="105.0" y="30.3" width="16.0" height="8.6" fill="#ec2f2f"/>
<text x="46.2" y="36" font-size="3.50" font-weight="bold" fill="#dcdcdc" text-anchor="end" textLength="20.5" lengthAdjust="spacingAndGlyphs">LAVACA - T...</text>
<rect x="47.6" y="40.8" width="52.4" height="8.6" fill="#2a9444"/>
<rect x="100.0" y="40.8" width="5.6" height="8.6" fill="#ec2f2f"/>
<text x="46.2" y="46" font-size="3.50" font-weight="bold" fill="#dcdcdc" text-anchor="end" textLength="22.0" lengthAdjust="spacingAndGlyphs">GONZALES ...</text>
<rect x="47.6" y="51.3" width="5.8" height="8.6" fill="#2a9444"/>
<rect x="53.4" y="51.3" width="8.5" height="8.6" fill="#ec2f2f"/>
<text x="46.2" y="57" font-size="3.50" font-weight="bold" fill="#dcdcdc" text-anchor="end" textLength="19.5" lengthAdjust="spacingAndGlyphs">LA SALLE ...</text>
<rect x="47.6" y="61.8" width="11.0" height="8.6" fill="#2a9444"/>
<rect x="58.6" y="61.8" width="2.6" height="8.6" fill="#ec2f2f"/>
<text x="46.2" y="67" font-size="3.50" font-weight="bold" fill="#dcdcdc" text-anchor="end" textLength="20.5" lengthAdjust="spacingAndGlyphs">FAYETTE - ...</text>
<rect x="47.6" y="72.3" width="2.6" height="8.6" fill="#2a9444"/>
<rect x="50.2" y="72.3" width="7.7" height="8.6" fill="#ec2f2f"/>
<text x="46.2" y="78" font-size="3.50" font-weight="bold" fill="#dcdcdc" text-anchor="end" textLength="17.5" lengthAdjust="spacingAndGlyphs">DE WITT ...</text>
<text x="62.6" y="86" font-size="3.20" font-weight="bold" fill="#c8c8c8" text-anchor="middle" textLength="8.8" lengthAdjust="spacingAndGlyphs">20 MM</text>
<text x="77.2" y="86" font-size="3.20" font-weight="bold" fill="#c8c8c8" text-anchor="middle" textLength="8.8" lengthAdjust="spacingAndGlyphs">40 MM</text>
<text x="91.8" y="86" font-size="3.20" font-weight="bold" fill="#c8c8c8" text-anchor="middle" textLength="8.8" lengthAdjust="spacingAndGlyphs">60 MM</text>
<text x="106.4" y="86" font-size="3.20" font-weight="bold" fill="#c8c8c8" text-anchor="middle" textLength="8.8" lengthAdjust="spacingAndGlyphs">80 MM</text>
<text x="121.0" y="86" font-size="3.20" font-weight="bold" fill="#c8c8c8" text-anchor="middle" textLength="10.5" lengthAdjust="spacingAndGlyphs">100 MM</text>
<rect x="20.5" y="90.8" width="3.6" height="3.4" fill="#ec2f2f"/><rect x="20.5" y="96" width="3.6" height="3.4" fill="#2a9444"/>
<text x="28.8" y="94" font-size="3.20" fill="#8f8f8f" text-anchor="start" textLength="12.5" lengthAdjust="spacingAndGlyphs">Cum Gas</text>
<text x="28.8" y="99" font-size="3.20" fill="#8f8f8f" text-anchor="start" textLength="11.0" lengthAdjust="spacingAndGlyphs">Cum Oil</text>
<text x="86.5" y="95" font-size="3.10" fill="#8f8f8f" text-anchor="middle">BOE</text>
</svg>
<svg width="648" height="418">
<path d="M39.5 119.0 H123" stroke="#3a3a3a" stroke-width="0.5"/>
<path d="M39.5 127.8 H123" stroke="#3a3a3a" stroke-width="0.5"/>
<path d="M39.5 136.7 H123" stroke="#3a3a3a" stroke-width="0.5"/>
<path d="M39.5 145.5 H123" stroke="#3a3a3a" stroke-width="0.5"/>
<path d="M39.5 154.4 H123" stroke="#3a3a3a" stroke-width="0.5"/>
<path d="M52.8 116 V164" stroke="#3a3a3a" stroke-width="0.5"/>
<path d="M70.4 116 V164" stroke="#3a3a3a" stroke-width="0.5"/>
<path d="M87.9 116 V164" stroke="#3a3a3a" stroke-width="0.5"/>
<path d="M105.5 116 V164" stroke="#3a3a3a" stroke-width="0.5"/>
<path d="M123.0 116 V164" stroke="#3a3a3a" stroke-width="0.5"/>
<path d="M39.5 164 H123.4" stroke="#666" stroke-width="0.5"/>
<path d="M106.5 133.0 L107.0 132.0 L108.8 127.0 L111.0 128.0 L113.1 124.8 L115.3 125.9 L117.4 121.5 L119.5 122.6 L121.7 121.1 L123.2 123.7 L123.2 156.0 Z" fill="#19b5d6"/>
<path d="M73.2 164.0 L75.5 158.0 L78.6 149.5 L80.8 143.0 L82.9 136.6 L84.6 129.0 L86.2 121.5 L87.2 117.7 L88.3 119.0 L89.4 121.5 L90.5 127.0 L91.6 132.3 L92.8 136.5 L94.1 139.9 L95.5 141.4 L96.9 142.0 L98.0 140.0 L99.1 136.6 L100.2 131.5 L101.3 125.9 L102.2 122.5 L103.0 119.8 L103.8 121.0 L104.5 123.7 L105.3 128.0 L106.2 132.3 L110.0 137.5 L114.0 143.0 L118.0 148.7 L123.2 155.5 L123.2 164.0 Z" fill="#1cc9a7"/>
<path d="M50 163.6 L73.5 163.5" stroke="#1a8f5a" stroke-width="0.5" fill="none"/>
<text x="37.8" y="120" font-size="3.20" font-weight="bold" fill="#cfcfcf" text-anchor="end">2 MM</text>
<text x="37.8" y="129" font-size="3.20" font-weight="bold" fill="#cfcfcf" text-anchor="end">1.6 MM</text>
<text x="37.8" y="138" font-size="3.20" font-weight="bold" fill="#cfcfcf" text-anchor="end">1.2 MM</text>
<text x="37.8" y="147" font-size="3.20" font-weight="bold" fill="#cfcfcf" text-anchor="end">800 M</text>
<text x="37.8" y="156" font-size="3.20" font-weight="bold" fill="#cfcfcf" text-anchor="end">400 M</text>
<text x="52.8" y="170" font-size="3.20" font-weight="bold" fill="#cfcfcf" text-anchor="middle">2005s</text>
<text x="70.4" y="170" font-size="3.20" font-weight="bold" fill="#cfcfcf" text-anchor="middle">2010s</text>
<text x="87.9" y="170" font-size="3.20" font-weight="bold" fill="#cfcfcf" text-anchor="middle">2015s</text>
<text x="105.5" y="170" font-size="3.20" font-weight="bold" fill="#cfcfcf" text-anchor="middle">2020s</text>
<text x="121.5" y="170" font-size="3.20" font-weight="bold" fill="#cfcfcf" text-anchor="middle">2025s</text>
<text x="81.5" y="174" font-size="3.00" fill="#858585" text-anchor="middle">Time</text>
<text transform="translate(23.7 139.3) rotate(-90)" font-size="3.2" fill="#858585" text-anchor="middle" textLength="40" lengthAdjust="spacingAndGlyphs">Monthly Production (BOE)</text>
<path d="M21.5 179.7 H29.9" stroke="#1cc96e" stroke-width="1.3"/>
<text x="31.4" y="181" font-size="3.40" fill="#858585" text-anchor="start" textLength="10.2" lengthAdjust="spacingAndGlyphs">2000's</text>
<path d="M44.2 179.7 H52.6" stroke="#1cc9a7" stroke-width="1.3"/>
<text x="54.1" y="181" font-size="3.40" fill="#858585" text-anchor="start" textLength="10.2" lengthAdjust="spacingAndGlyphs">2010's</text>
<path d="M67.4 179.7 H75.8" stroke="#19b5d6" stroke-width="1.3"/>
<text x="77.3" y="181" font-size="3.40" fill="#858585" text-anchor="start" textLength="10.2" lengthAdjust="spacingAndGlyphs">2020's</text>
</svg>
<svg width="648" height="418">
<path d="M25.0 199.7 V255" stroke="#3c3c3c" stroke-width="0.5"/>
<path d="M44.1 199.7 V255" stroke="#3c3c3c" stroke-width="0.5"/>
<path d="M63.1 199.7 V255" stroke="#3c3c3c" stroke-width="0.5"/>
<path d="M82.2 199.7 V255" stroke="#3c3c3c" stroke-width="0.5"/>
<path d="M101.2 199.7 V255" stroke="#3c3c3c" stroke-width="0.5"/>
<path d="M120.3 199.7 V255" stroke="#3c3c3c" stroke-width="0.5"/>
<rect x="25" y="211" width="95.3" height="33" fill="#08a8ff"/>
<text x="25.0" y="260" font-size="3.20" fill="#a8a8a8" text-anchor="middle">0%</text>
<text x="44.1" y="260" font-size="3.20" fill="#a8a8a8" text-anchor="middle">20%</text>
<text x="63.1" y="260" font-size="3.20" fill="#a8a8a8" text-anchor="middle">40%</text>
<text x="82.2" y="260" font-size="3.20" fill="#a8a8a8" text-anchor="middle">60%</text>
<text x="101.2" y="260" font-size="3.20" fill="#a8a8a8" text-anchor="middle">80%</text>
<text x="120.3" y="260" font-size="3.20" fill="#a8a8a8" text-anchor="middle">100%</text>
<text transform="translate(20.7 227.5) rotate(-90)" font-size="3" fill="#858585" text-anchor="middle">Well Count</text>
<rect x="19.0" y="267.8" width="3.5" height="3.5" fill="#08a8ff"/>
<text x="26.0" y="271" font-size="3.20" fill="#a0a0a0" text-anchor="start" textLength="22.0" lengthAdjust="spacingAndGlyphs">HORIZONTAL</text>
<rect x="53.4" y="267.8" width="3.5" height="3.5" fill="#6a35d8"/>
<text x="60.4" y="271" font-size="3.20" fill="#a0a0a0" text-anchor="start" textLength="16.0" lengthAdjust="spacingAndGlyphs">VERTICAL</text>
<rect x="83.0" y="267.8" width="3.5" height="3.5" fill="#e83a78"/>
<text x="90.0" y="271" font-size="3.20" fill="#a0a0a0" text-anchor="start" textLength="21.5" lengthAdjust="spacingAndGlyphs">DIRECTIONAL</text>
</svg>
</div>
<div class="abs" style="left:652.9px;top:4.7px;width:441.8px;height:201.5px;background:#2a2a2a;"></div>
<div class="abs" style="left:652.9px;top:4.7px;width:441.8px;height:14.1px;background:#131313;"></div>
<svg width="1100" height="418">
<text x="658.8" y="14" font-size="6.50" font-weight="bold" fill="#e8e8e8" text-anchor="start" textLength="34.0" lengthAdjust="spacingAndGlyphs">Oil Prod Plot</text>
</svg>
<div class="abs" style="left:694.8px;top:8.1px;width:0.6px;height:7.6px;background:#4a4a4a;"></div>
<svg width="1100" height="418">
<text x="697.8" y="14" font-size="4.90" fill="#c4c4c4" text-anchor="start" textLength="45.7" lengthAdjust="spacingAndGlyphs">PRODUCTION PLOT</text>
</svg>
<svg width="1100" height="418">
<circle cx="1035" cy="12.3" r="2.1" fill="none" stroke="#d6d6d6" stroke-width="0.8"/><path d="M1033.8 9.6 H1036.2" stroke="#d6d6d6" stroke-width="0.9"/>
<path d="M1044 8.8 V14.8" stroke="#444" stroke-width="0.5"/>
<circle cx="1050.4" cy="12.0" r="0.65" fill="#d6d6d6"/>
<circle cx="1052.2" cy="12.0" r="0.65" fill="#d6d6d6"/>
<circle cx="1054.0" cy="12.0" r="0.65" fill="#d6d6d6"/>
<path d="M1062 14.8 H1067.2" stroke="#d6d6d6" stroke-width="0.8"/>
<path d="M1073.2 11.0 V9.1 H1075.1 M1077.2 9.1 H1079.1 V11.0 M1079.1 12.9 V14.8 H1077.2 M1075.1 14.8 H1073.2 V12.9" fill="none" stroke="#d6d6d6" stroke-width="0.85"/>
<path d="M1086.2 9.6 L1090.8 14.3 M1090.8 9.6 L1086.2 14.3" stroke="#d6d6d6" stroke-width="0.85"/>
</svg>
<div class="abs" style="left:652.9px;top:210.2px;width:441.8px;height:200.8px;background:#2a2a2a;"></div>
<div class="abs" style="left:652.9px;top:210.2px;width:441.8px;height:13.8px;background:#131313;"></div>
<svg width="1100" height="418">
<text x="658.8" y="220" font-size="6.50" font-weight="bold" fill="#e8e8e8" text-anchor="start" textLength="69.2" lengthAdjust="spacingAndGlyphs">Oil/ft TC by Landing Zone</text>
</svg>
<div class="abs" style="left:730.2px;top:213.4px;width:0.6px;height:7.6px;background:#4a4a4a;"></div>
<svg width="1100" height="418">
<text x="733.2" y="219" font-size="4.90" fill="#c4c4c4" text-anchor="start" textLength="29.7" lengthAdjust="spacingAndGlyphs">TYPE CURVE</text>
</svg>
<svg width="1100" height="418">
<circle cx="1035" cy="217.7" r="2.1" fill="none" stroke="#d6d6d6" stroke-width="0.8"/><path d="M1033.8 215.0 H1036.2" stroke="#d6d6d6" stroke-width="0.9"/>
<path d="M1044 214.2 V220.2" stroke="#444" stroke-width="0.5"/>
<circle cx="1050.4" cy="217.4" r="0.65" fill="#d6d6d6"/>
<circle cx="1052.2" cy="217.4" r="0.65" fill="#d6d6d6"/>
<circle cx="1054.0" cy="217.4" r="0.65" fill="#d6d6d6"/>
<path d="M1062 220.1 H1067.2" stroke="#d6d6d6" stroke-width="0.8"/>
<path d="M1073.2 216.3 V214.4 H1075.1 M1077.2 214.4 H1079.1 V216.3 M1079.1 218.3 V220.2 H1077.2 M1075.1 220.2 H1073.2 V218.3" fill="none" stroke="#d6d6d6" stroke-width="0.85"/>
<path d="M1086.2 214.9 L1090.8 219.7 M1090.8 214.9 L1086.2 219.7" stroke="#d6d6d6" stroke-width="0.85"/>
</svg>
<svg width="1100" height="418">
<path d="M678.4 167.3 H966.5" stroke="#606060" stroke-width="0.7" stroke-dasharray="1.4 1.2"/>
<path d="M678.4 150.5 H966.5" stroke="#606060" stroke-width="0.7" stroke-dasharray="1.4 1.2"/>
<path d="M678.4 137.8 H966.5" stroke="#606060" stroke-width="0.7" stroke-dasharray="1.4 1.2"/>
<path d="M678.4 125.1 H966.5" stroke="#606060" stroke-width="0.7" stroke-dasharray="1.4 1.2"/>
<path d="M678.4 108.3 H966.5" stroke="#606060" stroke-width="0.7" stroke-dasharray="1.4 1.2"/>
<path d="M678.4 95.6 H966.5" stroke="#606060" stroke-width="0.7" stroke-dasharray="1.4 1.2"/>
<path d="M678.4 82.9 H966.5" stroke="#606060" stroke-width="0.7" stroke-dasharray="1.4 1.2"/>
<path d="M678.4 66.1 H966.5" stroke="#606060" stroke-width="0.7" stroke-dasharray="1.4 1.2"/>
<path d="M678.4 53.4 H966.5" stroke="#606060" stroke-width="0.7" stroke-dasharray="1.4 1.2"/>
<path d="M678.4 40.7 H966.5" stroke="#606060" stroke-width="0.7" stroke-dasharray="1.4 1.2"/>
<path d="M710.4 27.7 V170.3" stroke="#606060" stroke-width="0.7" stroke-dasharray="1.4 1.2"/>
<path d="M742.2 27.7 V170.3" stroke="#606060" stroke-width="0.7" stroke-dasharray="1.4 1.2"/>
<path d="M774.1 27.7 V170.3" stroke="#606060" stroke-width="0.7" stroke-dasharray="1.4 1.2"/>
<path d="M806.0 27.7 V170.3" stroke="#606060" stroke-width="0.7" stroke-dasharray="1.4 1.2"/>
<path d="M837.8 27.7 V170.3" stroke="#606060" stroke-width="0.7" stroke-dasharray="1.4 1.2"/>
<path d="M869.6 27.7 V170.3" stroke="#606060" stroke-width="0.7" stroke-dasharray="1.4 1.2"/>
<path d="M901.5 27.7 V170.3" stroke="#606060" stroke-width="0.7" stroke-dasharray="1.4 1.2"/>
<path d="M933.4 27.7 V170.3" stroke="#606060" stroke-width="0.7" stroke-dasharray="1.4 1.2"/>
<path d="M965.2 27.7 V170.3" stroke="#606060" stroke-width="0.7" stroke-dasharray="1.4 1.2"/>
<path d="M678.4 27.7 V170.3 H966.5" fill="none" stroke="#858585" stroke-width="0.7"/>
<text x="674.3" y="55.9" font-size="6.6" fill="#e4e4e4" text-anchor="end" font-weight="bold" textLength="6.8" lengthAdjust="spacingAndGlyphs">10</text>
<text x="674.5" y="52.8" font-size="3.6" fill="#e4e4e4" font-weight="bold">5</text>
<text x="674.3" y="98.1" font-size="6.6" fill="#e4e4e4" text-anchor="end" font-weight="bold" textLength="6.8" lengthAdjust="spacingAndGlyphs">10</text>
<text x="674.5" y="95.0" font-size="3.6" fill="#e4e4e4" font-weight="bold">4</text>
<text x="674.3" y="140.3" font-size="6.6" fill="#e4e4e4" text-anchor="end" font-weight="bold" textLength="6.8" lengthAdjust="spacingAndGlyphs">10</text>
<text x="674.5" y="137.2" font-size="3.6" fill="#e4e4e4" font-weight="bold">3</text>
<text x="676.6" y="42" font-size="3.30" font-weight="bold" fill="#c8c8c8" text-anchor="end">2</text>
<text x="676.6" y="67" font-size="3.30" font-weight="bold" fill="#c8c8c8" text-anchor="end">5</text>
<text x="676.6" y="84" font-size="3.30" font-weight="bold" fill="#c8c8c8" text-anchor="end">2</text>
<text x="676.6" y="109" font-size="3.30" font-weight="bold" fill="#c8c8c8" text-anchor="end">5</text>
<text x="676.6" y="126" font-size="3.30" font-weight="bold" fill="#c8c8c8" text-anchor="end">2</text>
<text x="676.6" y="152" font-size="3.30" font-weight="bold" fill="#c8c8c8" text-anchor="end">5</text>
<text x="676.6" y="168" font-size="3.30" font-weight="bold" fill="#c8c8c8" text-anchor="end">2</text>
<text transform="translate(675.8 177.2) rotate(45)" font-size="5.2" fill="#d4d4d4" font-weight="bold">Jan 2010</text>
<text transform="translate(707.6 177.2) rotate(45)" font-size="5.2" fill="#d4d4d4" font-weight="bold">Jan 2012</text>
<text transform="translate(739.5 177.2) rotate(45)" font-size="5.2" fill="#d4d4d4" font-weight="bold">Jan 2014</text>
<text transform="translate(771.3 177.2) rotate(45)" font-size="5.2" fill="#d4d4d4" font-weight="bold">Jan 2016</text>
<text transform="translate(803.1 177.2) rotate(45)" font-size="5.2" fill="#d4d4d4" font-weight="bold">Jan 2018</text>
<text transform="translate(835.0 177.2) rotate(45)" font-size="5.2" fill="#d4d4d4" font-weight="bold">Jan 2020</text>
<text transform="translate(866.9 177.2) rotate(45)" font-size="5.2" fill="#d4d4d4" font-weight="bold">Jan 2022</text>
<text transform="translate(898.7 177.2) rotate(45)" font-size="5.2" fill="#d4d4d4" font-weight="bold">Jan 2024</text>
<text transform="translate(930.5 177.2) rotate(45)" font-size="5.2" fill="#d4d4d4" font-weight="bold">Jan 2026</text>
<text transform="translate(962.4 177.2) rotate(45)" font-size="5.2" fill="#d4d4d4" font-weight="bold">Jan 2028</text>
<text x="823.0" y="201" font-size="5.10" fill="#767676" text-anchor="middle" textLength="11.8" lengthAdjust="spacingAndGlyphs">Date</text>
<text transform="translate(663.6 102.4) rotate(-90)" font-size="5.1" fill="#727272" text-anchor="middle" textLength="86.6" lengthAdjust="spacingAndGlyphs">Monthly Production Rate / Volume</text>
<path d="M677.7 159.7 L686.5 159.7 L687.4 168.8 L688.2 170.2 L689.8 170.2 L690.7 161.9 L692.0 156.4 L693.4 148.2 L694.8 153.7 L697.5 157.8 L698.9 156.4 L700.3 159.2 L701.7 157.8 L702.5 142.6 L703.1 109.6 L705.8 105.5 L708.6 101.3 L709.9 87.5 L711.3 73.8 L712.9 64.9 L715.1 59.8 L716.5 61.3 L718.7 66.4 L720.9 64.2 L723.1 62.7 L725.3 62.0 L726.7 54.7 L728.2 50.4 L730.4 49.6 L732.5 51.1 L734.7 51.8 L736.9 47.5 L738.4 48.2 L740.5 51.1 L742.7 52.5 L744.9 48.9 L747.1 51.8 L749.3 52.5 L751.5 48.9 L753.6 49.6 L755.8 45.3 L757.3 43.8 L758.7 47.5 L760.9 51.8 L763.1 53.3 L765.3 48.2 L766.7 46.7 L768.9 50.4 L771.1 52.5 L773.3 54.0 L775.5 55.5 L777.6 57.6 L779.8 55.5 L782.0 56.9 L784.9 59.1 L787.8 61.3 L790.7 62.7 L792.9 63.5 L795.1 62.0 L796.5 64.2 L798.0 57.6 L800.2 54.7 L802.4 51.8 L803.8 53.3 L806.0 56.2 L808.2 58.4 L810.4 60.5 L812.5 58.4 L814.7 56.2 L816.2 48.2 L817.6 47.5 L819.1 54.0 L820.0 55.5 L822.9 59.1 L825.1 58.4 L827.3 60.5 L828.7 62.7 L830.2 54.0 L831.6 51.8 L833.8 55.5 L835.3 57.6 L836.7 53.3 L838.9 48.2 L841.1 49.6 L842.5 56.2 L843.3 63.5 L844.7 48.9 L846.2 46.7 L847.6 48.9 L849.1 43.8 L851.3 46.7 L853.5 49.6 L854.9 54.0 L856.4 47.5 L857.8 43.8 L859.3 42.4 L861.5 43.8 L863.6 46.0 L866.5 48.2 L869.5 49.6 L871.6 51.8 L874.5 52.5 L877.5 54.0 L880.4 56.9 L882.5 51.8 L884.0 49.6 L886.2 51.8 L888.4 54.0 L890.5 58.4 L892.7 55.5 L894.9 53.3 L897.1 54.7 L899.3 56.9 L901.5 55.5 L904.4 58.4 L907.3 56.9 L910.2 59.1 L913.1 58.4 L915.3 61.3 L917.5 59.8 L919.6 62.7 L921.8 60.5 L924.0 61.3 L926.2 59.1 L927.6 59.1" fill="none" stroke="#d8a096" stroke-width="1.3" stroke-linejoin="round"/>
<path d="M696.7 152.3 L697.5 98.6 L698.9 73.8 L699.8 72.2 L701.3 62.0 L702.7 56.2 L704.9 53.3 L707.1 55.5 L709.3 51.8 L712.2 53.3 L715.1 52.5 L718.0 53.3 L720.2 51.8 L722.4 54.0 L724.5 51.8 L726.7 48.2 L728.9 47.5 L731.1 48.2 L734.0 49.6 L736.9 47.5 L739.1 50.4 L741.3 51.8 L743.5 50.4 L745.6 52.5 L747.8 51.1 L750.0 48.2 L752.2 50.4 L754.4 51.8 L757.3 53.3 L760.2 51.8 L762.4 54.7 L764.5 56.9 L766.7 53.3 L768.9 51.8 L771.1 47.5 L772.5 44.5 L774.0 48.9 L776.2 52.5 L778.4 55.5 L780.5 57.6 L783.5 58.4 L786.4 59.8 L789.3 61.3 L792.2 62.7 L793.6 55.5 L795.1 54.7 L796.5 58.4 L798.7 61.3 L800.9 59.8 L803.1 62.7 L805.3 61.3 L807.5 60.5 L808.9 54.7 L811.1 53.3 L813.3 52.5 L815.5 53.3 L817.6 50.4 L819.8 51.1 L820.0 51.1 L822.9 53.3 L825.8 55.5 L828.7 53.3 L831.6 50.4 L834.5 48.9 L837.5 47.5 L840.4 48.9 L843.3 48.2 L846.2 51.8 L849.1 54.0 L852.0 55.5 L854.2 56.9 L856.4 43.8 L857.8 40.9 L860.0 43.8 L862.2 45.3 L865.1 47.5 L868.0 49.6 L870.9 51.1 L873.8 51.8 L876.7 54.0 L879.6 56.2 L882.5 56.9 L884.7 48.9 L886.2 46.7 L887.6 49.6 L889.8 52.5 L892.0 54.0 L894.2 51.8 L895.6 52.5 L897.8 54.7 L900.0 54.0 L902.2 56.2 L904.4 56.9 L907.3 58.4 L910.2 57.6 L913.1 59.8 L916.0 60.5 L918.9 61.3 L921.8 62.0 L924.7 62.7 L926.9 62.7" fill="none" stroke="#6a7fd2" stroke-width="1.3" stroke-linejoin="round"/>
<path d="M695.3 150.9 L695.3 98.6 L697.5 97.2 L698.4 76.5 L700.3 68.3 L701.3 56.2 L703.5 51.8 L707.8 54.0 L710.7 49.6 L713.6 46.0 L716.5 42.4 L718.7 40.2 L720.9 42.4 L723.1 45.3 L726.0 48.9 L728.2 47.5 L731.1 45.3 L734.0 41.6 L736.9 38.0 L739.1 38.0 L741.3 40.9 L742.7 43.8 L744.2 41.6 L746.4 45.3 L749.3 47.5 L751.5 45.3 L753.6 40.2 L755.8 39.5 L758.0 40.9 L760.2 38.0 L762.4 36.5 L764.5 38.0 L766.7 38.0 L768.9 39.5 L771.8 41.6 L774.0 43.8 L776.2 44.5 L778.4 43.1 L780.5 43.8 L782.7 46.0 L784.9 48.2 L787.1 49.6 L789.3 47.5 L791.5 43.8 L792.9 41.6 L795.1 42.4 L797.3 44.5 L799.5 46.7 L801.6 48.2 L803.8 49.6 L806.0 48.2 L808.2 48.9 L810.4 48.2 L812.5 45.3 L815.5 42.4 L816.9 43.1 L819.1 41.6 L820.0 43.8 L822.2 48.2 L824.4 43.1 L827.3 40.2 L830.2 38.0 L833.1 36.5 L836.0 37.3 L838.9 38.7 L841.8 39.5 L844.0 42.4 L846.2 40.2 L848.4 43.1 L850.5 45.3 L852.7 46.7 L854.9 44.5 L856.4 38.7 L858.5 38.0 L860.7 40.9 L862.9 43.8 L865.1 38.7 L866.5 38.0 L868.7 39.5 L870.9 40.9 L873.1 40.2 L875.3 42.4 L877.5 43.8 L879.6 45.3 L881.1 38.7 L882.5 37.3 L884.7 38.0 L886.2 36.5 L887.6 35.8 L889.8 38.7 L891.3 40.2 L893.5 38.7 L894.9 39.5 L897.1 34.4 L899.3 32.2 L900.7 34.4 L902.2 38.0 L904.4 39.5 L906.5 40.9 L908.7 42.4 L910.9 43.8 L913.1 45.3 L915.3 46.7 L917.5 48.2 L919.6 49.6 L921.8 48.2 L923.3 48.9 L925.5 46.0 L926.9 46.7" fill="none" stroke="#2abdae" stroke-width="1.3" stroke-linejoin="round"/>
<path d="M696.7 152.3 L697.5 98.6 L698.9 73.8 L699.8 72.2 L701.3 62.0 L702.7 56.2" fill="none" stroke="#4b9fe0" stroke-width="1.1"/>
<path d="M926.9 46.3 L968.4 57.9" fill="none" stroke="#2abdae" stroke-width="1.3" stroke-dasharray="5.5 2.8"/>
<path d="M926.9 62.7 L968.4 70.0" fill="none" stroke="#6a7fd2" stroke-width="1.3" stroke-dasharray="5.5 2.8"/>
<path d="M927.6 59.1 L968.4 67.5" fill="none" stroke="#d8a096" stroke-width="1.3" stroke-dasharray="5.5 2.8"/>
<path d="M976.8 33.9 H988.6" stroke="#2abdae" stroke-width="1.1"/>
<text x="991.9" y="36" font-size="5.13" fill="#b4b4b4" text-anchor="start">L Eagle Ford, Oil (Monthly) , bbl</text>
<path d="M976.8 42.1 H988.6" stroke="#6a7fd2" stroke-width="1.1"/>
<text x="991.9" y="44" font-size="5.13" fill="#b4b4b4" text-anchor="start">U Eagle Ford, Oil (Monthly) , bbl</text>
<path d="M976.8 50.3 H988.6" stroke="#d8a096" stroke-width="1.1"/>
<text x="991.9" y="52" font-size="5.13" fill="#b4b4b4" text-anchor="start">Austin Chalk, Oil (Monthly) , bbl</text>
<path d="M976.8 58.5 H988.6" stroke="#2abdae" stroke-width="1.1" stroke-dasharray="4.4 3"/>
<text x="991.9" y="60" font-size="5.13" fill="#b4b4b4" text-anchor="start">L Eagle Ford, Oil (Monthly) Forecast , bbl</text>
<path d="M976.8 66.7 H988.6" stroke="#6a7fd2" stroke-width="1.1" stroke-dasharray="4.4 3"/>
<text x="991.9" y="69" font-size="5.13" fill="#b4b4b4" text-anchor="start">U Eagle Ford, Oil (Monthly) Forecast , bbl</text>
<path d="M976.8 74.9 H988.6" stroke="#d8a096" stroke-width="1.1" stroke-dasharray="4.4 3"/>
<text x="991.9" y="77" font-size="5.13" fill="#b4b4b4" text-anchor="start">Austin Chalk, Oil (Monthly) Forecast , bbl</text>
<rect x="654.0" y="203.5" width="1.6" height="1.6" fill="#141414"/>
<rect x="1092.0" y="203.5" width="1.6" height="1.6" fill="#141414"/>
<rect x="654.0" y="407.5" width="1.6" height="1.6" fill="#141414"/>
<rect x="1092.0" y="407.5" width="1.6" height="1.6" fill="#141414"/>
</svg>
<svg width="1100" height="418">
<path d="M678.3 383.5 H977.0" stroke="#545454" stroke-width="0.6" stroke-dasharray="1 1"/>
<path d="M678.3 373.6 H977.0" stroke="#545454" stroke-width="0.6" stroke-dasharray="1 1"/>
<path d="M678.3 365.9 H977.0" stroke="#545454" stroke-width="0.6" stroke-dasharray="1 1"/>
<path d="M678.3 359.6 H977.0" stroke="#545454" stroke-width="0.6" stroke-dasharray="1 1"/>
<path d="M678.3 354.3 H977.0" stroke="#545454" stroke-width="0.6" stroke-dasharray="1 1"/>
<path d="M678.3 349.7 H977.0" stroke="#545454" stroke-width="0.6" stroke-dasharray="1 1"/>
<path d="M678.3 345.6 H977.0" stroke="#545454" stroke-width="0.6" stroke-dasharray="1 1"/>
<path d="M678.3 342.0 H977.0" stroke="#606060" stroke-width="0.7" stroke-dasharray="1.6 1"/>
<path d="M678.3 318.1 H977.0" stroke="#545454" stroke-width="0.6" stroke-dasharray="1 1"/>
<path d="M678.3 304.1 H977.0" stroke="#545454" stroke-width="0.6" stroke-dasharray="1 1"/>
<path d="M678.3 294.2 H977.0" stroke="#545454" stroke-width="0.6" stroke-dasharray="1 1"/>
<path d="M678.3 286.5 H977.0" stroke="#545454" stroke-width="0.6" stroke-dasharray="1 1"/>
<path d="M678.3 280.2 H977.0" stroke="#545454" stroke-width="0.6" stroke-dasharray="1 1"/>
<path d="M678.3 274.9 H977.0" stroke="#545454" stroke-width="0.6" stroke-dasharray="1 1"/>
<path d="M678.3 270.3 H977.0" stroke="#545454" stroke-width="0.6" stroke-dasharray="1 1"/>
<path d="M678.3 266.2 H977.0" stroke="#545454" stroke-width="0.6" stroke-dasharray="1 1"/>
<path d="M678.3 262.6 H977.0" stroke="#606060" stroke-width="0.7" stroke-dasharray="1.6 1"/>
<path d="M678.3 238.7 H977.0" stroke="#545454" stroke-width="0.6" stroke-dasharray="1 1"/>
<path d="M716.5 232.4 V391.0" stroke="#606060" stroke-width="0.7" stroke-dasharray="1.6 1"/>
<text x="716.5" y="398" font-size="4.80" font-weight="bold" fill="#e0e0e0" text-anchor="middle">20</text>
<path d="M756.2 232.4 V391.0" stroke="#606060" stroke-width="0.7" stroke-dasharray="1.6 1"/>
<text x="756.2" y="398" font-size="4.80" font-weight="bold" fill="#e0e0e0" text-anchor="middle">40</text>
<path d="M795.8 232.4 V391.0" stroke="#606060" stroke-width="0.7" stroke-dasharray="1.6 1"/>
<text x="795.8" y="398" font-size="4.80" font-weight="bold" fill="#e0e0e0" text-anchor="middle">60</text>
<path d="M835.5 232.4 V391.0" stroke="#606060" stroke-width="0.7" stroke-dasharray="1.6 1"/>
<text x="835.5" y="398" font-size="4.80" font-weight="bold" fill="#e0e0e0" text-anchor="middle">80</text>
<path d="M875.2 232.4 V391.0" stroke="#606060" stroke-width="0.7" stroke-dasharray="1.6 1"/>
<text x="875.2" y="398" font-size="4.80" font-weight="bold" fill="#e0e0e0" text-anchor="middle">100</text>
<path d="M914.9 232.4 V391.0" stroke="#606060" stroke-width="0.7" stroke-dasharray="1.6 1"/>
<text x="914.9" y="398" font-size="4.80" font-weight="bold" fill="#e0e0e0" text-anchor="middle">120</text>
<path d="M954.6 232.4 V391.0" stroke="#606060" stroke-width="0.7" stroke-dasharray="1.6 1"/>
<text x="954.6" y="398" font-size="4.80" font-weight="bold" fill="#e0e0e0" text-anchor="middle">140</text>
<path d="M678.3 232.4 V391.0 H977.0" fill="none" stroke="#8a8a8a" stroke-width="0.7"/>
<text x="676" y="265" font-size="6.6" fill="#e8e8e8" text-anchor="end" font-weight="bold" textLength="3" lengthAdjust="spacingAndGlyphs">1</text>
<text x="670.6" y="344.5" font-size="6.6" fill="#e8e8e8" text-anchor="end" font-weight="bold" textLength="6.8" lengthAdjust="spacingAndGlyphs">10</text>
<text x="670.8" y="341.4" font-size="3.6" fill="#e8e8e8" font-weight="bold">-1</text>
<text x="677.0" y="240" font-size="3.30" font-weight="bold" fill="#c8c8c8" text-anchor="end">2</text>
<text x="677.0" y="267" font-size="3.30" font-weight="bold" fill="#c8c8c8" text-anchor="end">9</text>
<text x="677.0" y="271" font-size="3.30" font-weight="bold" fill="#c8c8c8" text-anchor="end">8</text>
<text x="677.0" y="276" font-size="3.30" font-weight="bold" fill="#c8c8c8" text-anchor="end">7</text>
<text x="677.0" y="281" font-size="3.30" font-weight="bold" fill="#c8c8c8" text-anchor="end">6</text>
<text x="677.0" y="288" font-size="3.30" font-weight="bold" fill="#c8c8c8" text-anchor="end">5</text>
<text x="677.0" y="295" font-size="3.30" font-weight="bold" fill="#c8c8c8" text-anchor="end">4</text>
<text x="677.0" y="305" font-size="3.30" font-weight="bold" fill="#c8c8c8" text-anchor="end">3</text>
<text x="677.0" y="319" font-size="3.30" font-weight="bold" fill="#c8c8c8" text-anchor="end">2</text>
<text x="677.0" y="347" font-size="3.30" font-weight="bold" fill="#c8c8c8" text-anchor="end">9</text>
<text x="677.0" y="351" font-size="3.30" font-weight="bold" fill="#c8c8c8" text-anchor="end">8</text>
<text x="677.0" y="355" font-size="3.30" font-weight="bold" fill="#c8c8c8" text-anchor="end">7</text>
<text x="677.0" y="361" font-size="3.30" font-weight="bold" fill="#c8c8c8" text-anchor="end">6</text>
<text x="677.0" y="367" font-size="3.30" font-weight="bold" fill="#c8c8c8" text-anchor="end">5</text>
<text x="677.0" y="375" font-size="3.30" font-weight="bold" fill="#c8c8c8" text-anchor="end">4</text>
<text x="677.0" y="385" font-size="3.30" font-weight="bold" fill="#c8c8c8" text-anchor="end">3</text>
<text x="828.0" y="406" font-size="5.10" fill="#767676" text-anchor="middle" textLength="39.5" lengthAdjust="spacingAndGlyphs">Sequence Month</text>
<text transform="translate(661.3 315.5) rotate(-90)" font-size="5.1" fill="#727272" text-anchor="middle" textLength="86.6" lengthAdjust="spacingAndGlyphs">Monthly Production Rate / Volume</text>
<path d="M678.6 266.8 L679.7 253.8 L680.8 248.5 L682.9 251.7 L687.2 259.2 L691.5 266.8 L695.8 274.3 L700.1 280.8 L704.5 286.1 L708.8 291.5 L713.1 295.2 L717.4 298.0 L721.7 301.2 L726.0 303.8 L730.3 308.7 L734.6 311.5 L738.9 314.1 L740.0 314.0 L744.3 316.1 L748.6 318.3 L752.9 319.4 L757.2 320.5 L761.5 322.6 L765.8 323.7 L770.1 326.9 L774.5 328.0 L777.7 325.8 L778.8 319.4 L780.5 321.5 L783.1 326.9 L787.4 329.1 L791.7 332.3 L796.0 332.3 L800.3 335.5 L804.6 339.8 L808.9 342.0 L813.2 343.1 L817.5 346.3 L821.8 346.9 L825.1 346.3 L828.3 345.2 L830.4 347.4 L832.6 342.0 L834.7 339.8 L836.9 343.1 L840.1 346.3 L843.4 350.6 L846.6 346.3 L849.8 344.8 L853.0 346.3 L856.3 349.5 L859.5 352.8 L862.7 353.8 L866.0 354.9 L869.2 357.1 L870.0 358.0 L875.3 360.6 L879.2 359.3 L883.2 360.6 L885.8 356.7 L889.7 355.4 L893.7 356.7 L897.6 355.4 L901.6 354.1 L905.5 359.3 L908.2 354.1 L910.8 352.7 L913.4 355.4 L917.4 356.7 L921.3 363.3 L923.9 359.3 L926.6 355.4 L929.2 348.8 L931.8 351.4 L934.5 354.1 L937.1 355.4 L939.7 359.3 L943.7 363.3 L947.6 365.9 L951.6 367.2 L955.5 364.6 L959.5 363.3 L962.1 369.8 L964.7 371.2 L968.7 373.8 L971.3 371.2 L973.9 376.4 L975.8 380.4" fill="none" stroke="#d8a096" stroke-width="1.3" stroke-linejoin="round"/>
<path d="M678.6 253.8 L679.7 243.1 L680.8 237.7 L682.9 243.1 L687.2 251.7 L691.5 261.4 L695.8 270.0 L700.1 277.5 L704.5 282.9 L708.8 288.3 L713.1 292.6 L717.4 295.8 L721.7 299.1 L726.0 302.3 L730.3 305.5 L734.6 308.7 L738.9 310.9 L740.0 309.7 L744.3 312.9 L748.6 315.1 L752.9 316.1 L757.2 318.3 L761.5 321.5 L765.8 324.8 L770.1 323.7 L774.5 325.8 L777.7 324.8 L778.8 320.5 L780.9 323.7 L784.1 326.9 L788.4 330.1 L792.8 332.3 L796.0 331.2 L799.2 331.2 L802.4 333.4 L805.7 334.5 L808.9 335.5 L813.2 338.8 L816.4 337.7 L819.7 338.8 L822.9 336.6 L826.1 338.8 L830.4 339.8 L834.7 338.8 L839.1 342.0 L843.4 343.1 L847.7 342.0 L852.0 342.0 L856.3 343.1 L859.5 346.3 L862.7 347.4 L867.0 349.5 L870.0 348.8 L875.3 350.1 L879.2 351.4 L881.8 348.8 L885.8 351.4 L889.7 352.7 L893.7 350.1 L897.6 351.4 L901.6 352.7 L905.5 354.1 L909.5 355.4 L913.4 356.7 L917.4 355.4 L921.3 356.7 L925.3 355.4 L929.2 359.3 L933.2 361.9 L937.1 364.6 L941.1 363.3 L945.0 364.6 L948.9 369.8 L952.9 372.5 L955.5 373.8 L959.5 371.2 L963.4 369.8 L967.4 372.5 L970.0 369.8 L972.6 367.2 L975.8 364.6" fill="none" stroke="#2abdae" stroke-width="1.3" stroke-linejoin="round"/>
<path d="M678.6 251.7 L679.5 240.9 L680.3 235.5 L682.9 240.9 L687.2 249.5 L691.5 259.2 L695.8 267.8 L700.1 275.4 L704.5 280.8 L708.8 285.1 L713.1 289.4 L717.4 292.6 L721.7 295.8 L726.0 298.0 L730.3 300.1 L734.6 302.3 L738.9 303.4 L740.0 303.2 L744.3 307.5 L748.6 309.7 L752.9 310.8 L756.1 309.7 L759.4 312.9 L763.7 317.2 L768.0 319.4 L772.3 321.5 L775.5 320.5 L778.8 317.2 L782.0 321.5 L786.3 324.8 L790.6 326.9 L792.8 324.8 L794.9 330.1 L798.1 331.2 L802.4 332.3 L806.8 332.3 L808.9 331.2 L813.2 333.4 L817.5 334.5 L821.8 335.5 L826.1 336.6 L830.4 337.7 L834.7 338.3 L839.1 339.8 L843.4 340.9 L846.6 339.8 L849.8 335.5 L853.0 334.5 L856.3 335.5 L860.6 335.5 L864.9 336.2 L868.1 334.5 L870.0 333.0 L875.3 335.6 L879.2 334.3 L883.2 336.9 L888.4 339.1 L893.7 338.3 L898.9 343.5 L901.6 345.4 L905.5 343.5 L909.5 342.2 L913.4 339.1 L918.7 336.4 L922.6 337.5 L926.6 340.9 L931.8 343.5 L935.8 344.8 L939.7 346.2 L943.7 347.5 L947.6 348.8 L951.6 350.1 L955.5 352.7 L959.5 352.2 L962.1 355.4 L964.7 359.3 L967.4 356.7 L969.5 361.9 L972.1 355.4 L973.9 357.5 L975.8 354.8" fill="none" stroke="#6a7fd2" stroke-width="1.3" stroke-linejoin="round"/>
<path d="M984.5 239.7 H996.8" stroke="#2abdae" stroke-width="1.1"/>
<text x="999.5" y="242" font-size="5.17" fill="#c0c0c0" text-anchor="start">L Eagle Ford, Oil (Monthly) , bbl per ft</text>
<path d="M984.5 248.0 H996.8" stroke="#6a7fd2" stroke-width="1.1"/>
<text x="999.5" y="250" font-size="5.17" fill="#c0c0c0" text-anchor="start">U Eagle Ford, Oil (Monthly) , bbl per ft</text>
<path d="M984.5 256.3 H996.8" stroke="#d8a096" stroke-width="1.1"/>
<text x="999.5" y="258" font-size="5.17" fill="#c0c0c0" text-anchor="start">Austin Chalk, Oil (Monthly) , bbl per ft</text>
</svg>
</div></body></html>
